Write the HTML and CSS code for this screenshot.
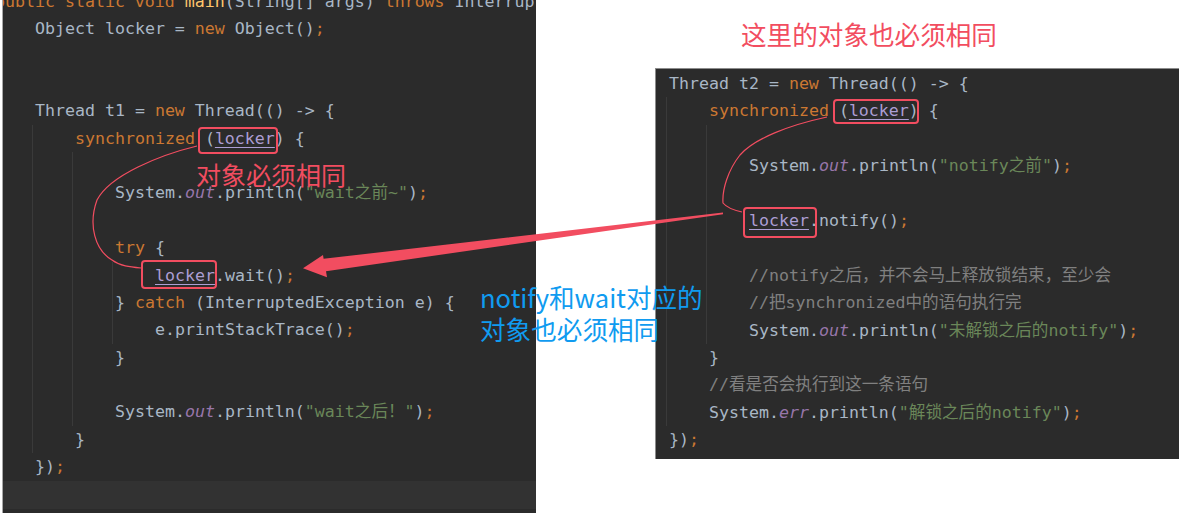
FILE: index.html
```html
<!DOCTYPE html>
<html lang="zh-CN">
<head>
    <meta charset="UTF-8">
    <title>wait / notify</title>
    <link rel="stylesheet" href="styles.css">
</head>
<body>
<div class="page">
    <div class="editor left">
        <div class="code left-code">
            <div class="ln top"><span class="k">public static void</span> <span class="m">main</span>(String[] args) <span class="k">throws</span> InterruptedException {</div>
            <div class="ln">Object locker = <span class="k">new</span> Object()<span class="k">;</span></div>
            <div class="ln"></div>
            <div class="ln"></div>
            <div class="ln">Thread t1 = <span class="k">new</span> Thread(() -&gt; {</div>
            <div class="blk">
                <div class="ln"><span class="k">synchronized</span> (<span class="v">locker</span>) {</div>
                <div class="blk">
                    <div class="ln"></div>
                    <div class="ln">System.<span class="f">out</span>.println(<span class="s">"wait之前~"</span>)<span class="k">;</span></div>
                    <div class="ln"></div>
                    <div class="ln"><span class="k">try</span> {</div>
                    <div class="blk">
                        <div class="ln"><span class="v">locker</span>.wait()<span class="k">;</span></div>
                        <div class="ln back">} <span class="k">catch</span> (InterruptedException e) {</div>
                        <div class="ln">e.printStackTrace()<span class="k">;</span></div>
                    </div>
                    <div class="ln">}</div>
                    <div class="ln"></div>
                    <div class="ln">System.<span class="f">out</span>.println(<span class="s">"wait之后！"</span>)<span class="k">;</span></div>
                </div>
                <div class="ln">}</div>
            </div>
            <div class="ln">})<span class="k">;</span></div>
        </div>
        <div class="band"></div>
    </div>

    <div class="side">
        <div class="title">这里的对象也必须相同</div>
        <div class="editor right">
            <div class="code right-code">
                <div class="ln">Thread t2 = <span class="k">new</span> Thread(() -&gt; {</div>
                <div class="blk">
                    <div class="ln"><span class="k">synchronized</span> (<span class="v">locker</span>) {</div>
                    <div class="blk">
                        <div class="ln"></div>
                        <div class="ln">System.<span class="f">out</span>.println(<span class="s">"notify之前"</span>)<span class="k">;</span></div>
                        <div class="ln"></div>
                        <div class="ln"><span class="v">locker</span>.notify()<span class="k">;</span></div>
                        <div class="ln"></div>
                        <div class="ln c">//notify之后，并不会马上释放锁结束，至少会</div>
                        <div class="ln c">//把synchronized中的语句执行完</div>
                        <div class="ln">System.<span class="f">out</span>.println(<span class="s">"未解锁之后的notify"</span>)<span class="k">;</span></div>
                    </div>
                    <div class="ln">}</div>
                    <div class="ln c">//看是否会执行到这一条语句</div>
                    <div class="ln">System.<span class="f">err</span>.println(<span class="s">"解锁之后的notify"</span>)<span class="k">;</span></div>
                </div>
                <div class="ln">})<span class="k">;</span></div>
            </div>
        </div>
    </div>

    <div class="note red-note">对象必须相同</div>
    <div class="note blue-note">notify和wait对应的<br>对象也必须相同</div>

    <svg class="marks" width="1179" height="513" viewBox="0 0 1179 513">
        <g fill="none" stroke="#f24d60">
            <rect x="199" y="128" width="78" height="25" rx="3" stroke-width="2"/>
            <rect x="142" y="261" width="74" height="27" rx="3" stroke-width="2"/>
            <rect x="834" y="100" width="84" height="23" rx="3" stroke-width="2"/>
            <rect x="744" y="208" width="72" height="29" rx="3" stroke-width="2"/>
            <path d="M197 146 C160 155 110 175 97 200 C88 225 95 250 112 260 C120 266 130 267 141 268" stroke-width="1.2"/>
            <path d="M827 117 C790 125 755 138 740 155 C728 170 722 190 723 203 C727 208 733 210 742 212" stroke-width="1.2"/>
        </g>
        <polygon fill="#f24d60" points="723,212.5 323.6,258.8 323,255 303,268.3 327,277.3 326,271.2 723,214.2"/>
    </svg>
</div>
</body>
</html>
```

FILE: styles.css
```css
body {
    margin: 0;
    background-color: #FFFFFF;
}

.page {
    position: relative;
    width: 1179px;
    height: 513px;
    overflow: hidden;
    display: flex;
    align-items: flex-start;
    background-color: #FFFFFF;
}

.editor {
    background-color: #2B2B2B;
    overflow: hidden;
}

.code {
    font-family: 'DejaVu Sans Mono', 'Noto Sans CJK SC', monospace;
    font-size: 16.6px;
    line-height: 27.4px;
    color: #A9B7C6;
}

.ln {
    height: 27.4px;
    white-space: pre;
}

.blk {
    margin-left: -3px;
    border-left: 1px solid #3A3A3A;
    padding-left: 42px;
}

.back {
    margin-left: -40px;
}

.top {
    margin-left: -40px;
}

.k { color: #CC7832; }
.s { color: #6A8759; }
.m { color: #FFC66D; }
.c { color: #808080; }
.f { color: #9876AA; font-style: italic; }
.v {
    color: #AC9ED4;
    text-decoration: underline;
    text-underline-offset: 3px;
}

/* left screenshot */
.left {
    width: 534px;
    height: 513px;
    margin-left: 2px;
    border-left: 1px solid #A8A8A8;
    box-sizing: border-box;
    display: flex;
    flex-direction: column;
    flex-shrink: 0;
}

.left-code {
    margin-top: -12.4px;
    padding-left: 32px;
}

.band {
    height: 28px;
    background-color: #323232;
}

/* right side */
.side {
    flex: 1;
    margin-left: 119px;
    display: flex;
    flex-direction: column;
}

.title {
    margin: 21px 0 0 86px;
    height: 47px;
    font-family: 'Noto Sans CJK SC', sans-serif;
    font-size: 25.6px;
    line-height: 25.6px;
    color: #F24D60;
}

.right {
    border-top: 1px solid #8C8C8C;
    border-left: 1px solid #8C8C8C;
    padding: 1px 0 6px 13px;
}

/* annotations over the screenshots */
.note {
    position: absolute;
    font-family: 'Noto Sans CJK SC', sans-serif;
    white-space: nowrap;
}

.red-note {
    left: 196px;
    top: 162px;
    font-size: 25px;
    line-height: 25px;
    color: #F24D60;
}

.blue-note {
    left: 480px;
    top: 281px;
    font-size: 25.6px;
    line-height: 32px;
    color: #109BF0;
}

.marks {
    position: absolute;
    left: 0;
    top: 0;
    pointer-events: none;
}
```
